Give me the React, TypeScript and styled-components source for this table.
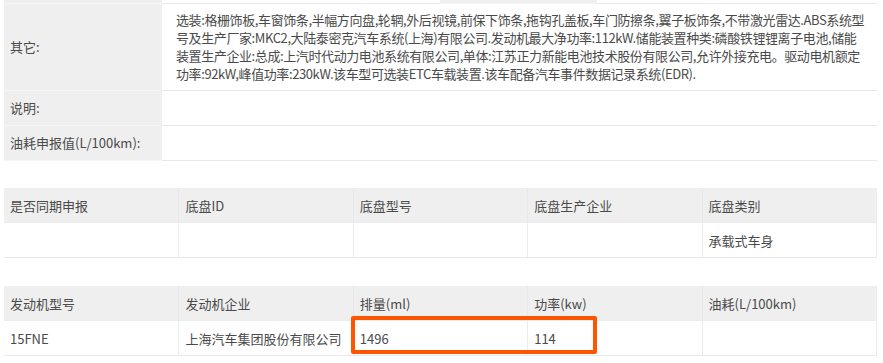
import React from 'react';
import styled, { createGlobalStyle } from 'styled-components';

// STYLES
const GlobalStyle = createGlobalStyle`
  html, body {
    margin: 0;
    padding: 0;
    background: #ffffff;
  }
  body {
    font-family: "Noto Sans CJK SC", "Microsoft YaHei", sans-serif;
    font-size: 13px;
    color: #4a4a4a;
  }
`;

const Page = styled.div`
  width: 883px;
  padding: 0 6px 0 4px;
  box-sizing: border-box;
`;

const InfoTable = styled.div`
  display: grid;
  grid-template-columns: 158px 278px 157px 280px;
  border-right: 1px solid #e6e6e6;
`;

const Cell = styled.div<{ $label?: boolean; $span?: number; $h: number }>`
  grid-column: span ${(p) => p.$span || 1};
  height: ${(p) => p.$h}px;
  box-sizing: content-box;
  background: ${(p) => (p.$label ? '#efefef' : '#ffffff')};
  border-bottom: 1px solid ${(p) => (p.$label ? '#f6f6f6' : '#e8e8e8')};
  display: flex;
  align-items: center;
  padding: 0 6px;
  line-height: 18px;
  white-space: nowrap;
  overflow: hidden;
`;

const Paragraph = styled.div`
  padding: 7px 0 0 8px;
  align-self: flex-start;
  line-height: 18px;
  letter-spacing: -0.4px;
  white-space: nowrap;
`;

const GridTable = styled.div<{ $gap: number }>`
  position: relative;
  margin-top: ${(p) => p.$gap}px;
  display: grid;
  grid-template-columns: repeat(5, 1fr);
  border-right: 1px solid #ececec;
`;

const HeadCell = styled.div`
  height: 34px;
  background: #efefef;
  border-bottom: 1px solid #ececec;
  border-left: 1px solid #e8e8e8;
  display: flex;
  align-items: center;
  padding: 0 6px;
  &:first-child {
    border-left: none;
  }
`;

const DataCell = styled.div`
  height: 34px;
  background: #ffffff;
  border-bottom: 1px solid #e8e8e8;
  border-left: 1px solid #ececec;
  display: flex;
  align-items: center;
  padding: 0 6px;
  &:nth-child(5n + 1) {
    border-left: none;
  }
`;

const Highlight = styled.div`
  position: absolute;
  left: 347px;
  top: 30px;
  width: 238px;
  height: 30px;
  border: 4px solid #ff5500;
  border-radius: 2px;
  pointer-events: none;
`;

// DATA
const otherLines = [
  '选装:格栅饰板,车窗饰条,半幅方向盘,轮辋,外后视镜,前保下饰条,拖钩孔盖板,车门防擦条,翼子板饰条,不带激光雷达.ABS系统型',
  '号及生产厂家:MKC2,大陆泰密克汽车系统(上海)有限公司.发动机最大净功率:112kW.储能装置种类:磷酸铁锂锂离子电池,储能',
  '装置生产企业:总成:上汽时代动力电池系统有限公司,单体:江苏正力新能电池技术股份有限公司,允许外接充电。驱动电机额定',
  '功率:92kW,峰值功率:230kW.该车型可选装ETC车载装置.该车配备汽车事件数据记录系统(EDR).',
];

const chassisHead = ['是否同期申报', '底盘ID', '底盘型号', '底盘生产企业', '底盘类别'];
const chassisRow = ['', '', '', '', '承载式车身'];

const engineHead = ['发动机型号', '发动机企业', '排量(ml)', '功率(kw)', '油耗(L/100km)'];
const engineRow = ['15FNE', '上海汽车集团股份有限公司', '1496', '114', ''];

// COMPONENT
const App: React.FC = () => {
  return (
    <Page>
      <GlobalStyle />

      <InfoTable>
        <Cell $label $h={3} />
        <Cell $h={3} />
        <Cell $label $h={3} />
        <Cell $h={3} />

        <Cell $label $h={86}>其它:</Cell>
        <Cell $span={3} $h={86}>
          <Paragraph>
            {otherLines.map((line) => (
              <div key={line}>{line}</div>
            ))}
          </Paragraph>
        </Cell>

        <Cell $label $h={34}>说明:</Cell>
        <Cell $span={3} $h={34} />

        <Cell $label $h={34}>油耗申报值(L/100km):</Cell>
        <Cell $span={3} $h={34} />
      </InfoTable>

      <GridTable $gap={27}>
        {chassisHead.map((h) => (
          <HeadCell key={h}>{h}</HeadCell>
        ))}
        {chassisRow.map((v, i) => (
          <DataCell key={i}>{v}</DataCell>
        ))}
      </GridTable>

      <GridTable $gap={28}>
        {engineHead.map((h) => (
          <HeadCell key={h}>{h}</HeadCell>
        ))}
        {engineRow.map((v, i) => (
          <DataCell key={i}>{v}</DataCell>
        ))}
        <Highlight />
      </GridTable>
    </Page>
  );
};

export default App;
